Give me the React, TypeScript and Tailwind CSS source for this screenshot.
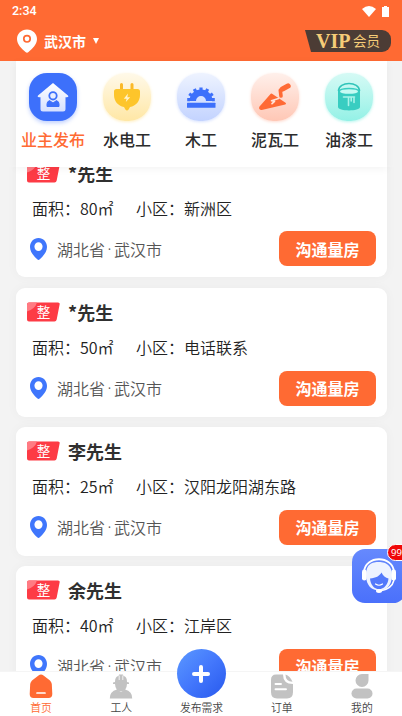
import type { ReactNode } from 'react'

type Order = {
  name: string
  area: number
  estate: string
}

const orders: Order[] = [
  { name: '*先生', area: 80, estate: '新洲区' },
  { name: '*先生', area: 50, estate: '电话联系' },
  { name: '李先生', area: 25, estate: '汉阳龙阳湖东路' },
  { name: '余先生', area: 40, estate: '江岸区' }
]

const HouseIcon = () => (
  <svg width="32" height="32" viewBox="0 0 32 32">
    <defs>
      <linearGradient id="house" x1="0" y1="0" x2="0" y2="1">
        <stop offset="0" stopColor="#ffffff" />
        <stop offset="1" stopColor="#d5e0ff" />
      </linearGradient>
    </defs>
    <path
      d="M16 2 L31 14.5 Q32 16.2 30 16.2 H28.5 V28 Q28.5 30.5 26 30.5 H6 Q3.5 30.5 3.5 28 V16.2 H2 Q0 16.2 1 14.5 Z"
      fill="url(#house)"
    />
    <circle cx="16" cy="14.8" r="3.7" fill="#e8eeff" stroke="#3d70fb" strokeWidth="1.8" />
    <path d="M12.5 19.6 Q10 20.5 10 23 V25.5 H22 V23 Q22 20.5 19.5 19.6 L16 22 Z" fill="#3d70fb" stroke="#3d70fb" strokeLinejoin="round" />
  </svg>
)

const PlugIcon = () => (
  <svg width="32" height="32" viewBox="0 0 32 32">
    <path d="M10.5 3.5 V10 M21 3.5 V10" stroke="#fbb929" strokeWidth="3" strokeLinecap="round" />
    <path
      d="M5.5 8 H26.5 Q29 8 29 10.5 V14 C29 20 25 25 19 26 L17.6 28.5 Q16 30.5 14.4 28.5 L13 26 C7 25 3 20 3 14 V10.5 Q3 8 5.5 8 Z"
      fill="#fdc52b"
    />
    <path d="M17 12.5 L12.8 17.7 H15.6 L14.8 21 L19.2 16.2 H16.3 Z" fill="#fff4cf" />
  </svg>
)

const SawIcon = () => (
  <svg width="32" height="32" viewBox="0 0 32 32" fill="#3d70fb">
    <path d="M4.5 20 A11.5 11.5 0 0 1 27.5 20 H21 A5 5 0 0 0 11 20 Z" />
    <path
      d="M16 9.5 V6.5 M10.7 10.8 L9.3 8 M6.7 14.5 L4.2 12.8 M5 18.7 H2.2 M21.3 10.8 L22.7 8 M25.3 14.5 L27.8 12.8 M27 18.7 H29.8"
      stroke="#3d70fb"
      strokeWidth="3.2"
    />
    <rect x="2" y="21.8" width="28.5" height="5" rx="0.5" />
  </svg>
)

const TrowelIcon = () => (
  <svg width="34" height="32" viewBox="0 0 34 32">
    <path d="M30 5 L22.3 9.4 L23 15" fill="none" stroke="#ff6a35" strokeWidth="3.6" strokeLinejoin="round" strokeLinecap="round" />
    <path d="M24.5 8 L30 5" stroke="#ff6a35" strokeWidth="5.4" strokeLinecap="round" />
    <path d="M13.5 13.5 L27 22.5 L3.5 28 Q1.5 28 2.3 26.2 Z" fill="#ff6a35" stroke="#ff6a35" strokeWidth="2" strokeLinejoin="round" />
    <path d="M20.5 17.5 L13.5 19.8 L16.5 20.3 L14 22.6" fill="none" stroke="#ffe3d9" strokeWidth="1.6" strokeLinecap="round" strokeLinejoin="round" />
  </svg>
)

const PaintIcon = () => (
  <svg width="32" height="32" viewBox="0 0 32 32">
    <path d="M5.5 10 C5.5 0 26.5 0 26.5 10" fill="none" stroke="#30c4b9" strokeWidth="1.6" />
    <path d="M5 10 V26 C5 30.5 27 30.5 27 26 V10 Z" fill="#38cdc1" />
    <ellipse cx="16" cy="10.5" rx="11" ry="3.8" fill="#38cdc1" />
    <ellipse cx="16" cy="10.5" rx="9" ry="2.3" fill="#c5faf3" />
    <path d="M10.5 16 H21.5 M15.5 16 V24.5 M18.2 16 V20 M21 16 V21.5" stroke="#a8f3e9" strokeWidth="1.6" strokeLinecap="round" />
  </svg>
)

const categories: { label: string; tile: string; active?: boolean; icon: ReactNode }[] = [
  {
    label: '业主发布',
    tile: 'rounded-[18px] bg-[#3d70fb] shadow-[0_2px_4px_#3d70fb55]',
    active: true,
    icon: <HouseIcon />
  },
  {
    label: '水电工',
    tile: 'rounded-[22px] bg-linear-to-b from-[#fff9e9] to-[#ffe7a5] shadow-[0_1px_3px_#ffe7a5aa]',
    icon: <PlugIcon />
  },
  {
    label: '木工',
    tile: 'rounded-[22px] bg-linear-to-b from-[#eef3ff] to-[#c3d3ff] shadow-[0_1px_3px_#c3d3ffaa]',
    icon: <SawIcon />
  },
  {
    label: '泥瓦工',
    tile: 'rounded-[22px] bg-linear-to-b from-[#fff0eb] to-[#ffc7b5] shadow-[0_1px_3px_#ffc7b5aa]',
    icon: <TrowelIcon />
  },
  {
    label: '油漆工',
    tile: 'rounded-[22px] bg-linear-to-b from-[#d5faf5] to-[#93f1e6] shadow-[0_1px_3px_#93f1e6aa]',
    icon: <PaintIcon />
  }
]

const Pin = ({ className }: { className: string }) => (
  <svg className={className} viewBox="0 0 20 24" preserveAspectRatio="none" fill="currentColor">
    <path
      fillRule="evenodd"
      d="M10 0 C4.3 0 0 4.3 0 9.7 C0 15.5 5 20 8.5 23.3 Q10 24.6 11.5 23.3 C15 20 20 15.5 20 9.7 C20 4.3 15.7 0 10 0 Z M10 4.6 A4.8 4.8 0 1 1 10 14.2 A4.8 4.8 0 1 1 10 4.6 Z"
    />
  </svg>
)

const Header = () => (
  <header className="h-[61px] shrink-0 bg-[#ff6a33] text-white">
    <div className="flex h-[23px] items-center justify-between pr-[13px] pl-3">
      <span className="font-['Roboto',sans-serif] text-[12.5px] leading-none font-medium">2:34</span>
      <div className="flex items-center gap-[6px]">
        <svg width="14" height="11" viewBox="0 0 14 11" fill="#fff">
          <path d="M0 3 Q7 -3 14 3 L7 11 Z" />
        </svg>
        <svg width="7" height="11" viewBox="0 0 7 11" fill="#fff">
          <path d="M2 0 H5 V1 H7 V11 H0 V1 H2 Z" />
        </svg>
      </div>
    </div>
    <div className="flex h-9 items-center justify-between pr-[11px] pl-[17px]">
      <div className="flex items-center">
        <svg width="20" height="24" viewBox="0 0 20 24">
          <path d="M10 0.5 C4.3 0.5 0 4.8 0 10 C0 15.8 5 19.7 8.5 23 Q10 24.4 11.5 23 C15 19.7 20 15.8 20 10 C20 4.8 15.7 0.5 10 0.5 Z" fill="#fff" />
          <circle cx="10" cy="9.8" r="3.2" fill="none" stroke="#ff6a33" strokeWidth="1.7" />
        </svg>
        <span className="ml-[7px] text-[14px] leading-none font-bold">武汉市</span>
        <svg className="ml-[7px]" width="6" height="6" viewBox="0 0 6 6" fill="#fff">
          <path d="M0 0 H6 L3 6 Z" />
        </svg>
      </div>
      <div className="flex h-[22px] w-[86px] items-center rounded-r-[9px] bg-[#4c3c35] pl-[11px] text-[#f6cc78] [clip-path:polygon(0_0,100%_0,100%_100%,7%_100%)]">
        <span className="w-9 font-['Liberation_Serif',serif] text-[20px] leading-none font-bold">VIP</span>
        <span className="pl-px text-[13.5px] leading-none">会员</span>
      </div>
    </div>
  </header>
)

const OrderCard = ({ name, area, estate }: Order) => (
  <article className="h-[129px] shrink-0 rounded-[9px] bg-white pr-[11px] pl-[11px] shadow-[0_0_12px_rgba(0,0,0,0.035)]">
    <div className="flex h-[49px] items-center">
      <svg width="33" height="20" viewBox="0 0 33 20">
        <path d="M2 0.5 H31 Q33 0.5 32.7 2 L29.7 17.5 Q29.3 19.5 27.5 19.5 H2 Q0 19.5 0 17.5 V2.5 Q0 0.5 2 0.5 Z" fill="#fd3b45" />
        <path d="M2 0.5 H10 Q8 7 0 9.5 V2.5 Q0 0.5 2 0.5 Z" fill="#ff7b83" />
        <text x="16.5" y="15" textAnchor="middle" fontSize="13.5" fill="#fff">整</text>
      </svg>
      <h2 className="ml-2 text-[18px] leading-none font-bold text-[#303030]">{name}</h2>
    </div>
    <div className="flex h-[21px] items-center pl-[5px] text-[16px] leading-none font-[350] text-[#222]">
      <span className="w-[104px]">面积：{area}㎡</span>
      <span>小区：{estate}</span>
    </div>
    <div className="mt-[13px] flex h-[35px] items-center">
      <Pin className="ml-[3px] h-[22px] w-[17px] text-[#3f76fc]" />
      <span className="ml-[10px] flex text-[16px] leading-4 font-[350] text-[#555]">
        湖北省
        <span className="w-[9px] text-center font-['Noto_Sans',sans-serif]">·</span>
        武汉市
      </span>
      <button className="ml-auto h-[35px] w-[97px] rounded-lg bg-[#ff6a33] text-[16px] leading-none font-bold text-white">
        沟通量房
      </button>
    </div>
  </article>
)

const ServiceButton = () => (
  <button className="absolute top-[549px] left-[352px] h-[54px] w-[54px] rounded-[13px] bg-linear-to-b from-[#6689fd] to-[#4a70fb]">
    <svg width="54" height="54" viewBox="0 0 54 54">
      <path d="M12 23 C13 6 41 6 42 23" fill="none" stroke="#fff" strokeWidth="1.8" />
      <path d="M14.5 31 C12 14 21 13 27 13 C34 13 42 17 39.5 31 C38 38 33 41.5 27 41.5 C21 41.5 16 38 14.5 31 Z" fill="#eef3ff" />
      <path d="M18 29.5 C24 29 27.5 27 29.5 23.5 C31 27 33.5 28.5 36.5 29.5 C36 35.5 32 40.2 27 40.2 C22 40.2 18.5 35.5 18 29.5 Z" fill="#5379fb" />
      <rect x="10" y="20.5" width="4.6" height="11" rx="2.3" fill="#fff" />
      <rect x="39.4" y="20.5" width="4.6" height="11" rx="2.3" fill="#fff" />
      <path d="M23.5 35 Q27 37.5 30.5 35" fill="none" stroke="#fff" strokeWidth="1.2" strokeLinecap="round" />
      <path d="M42 31 Q40 40 28 42" fill="none" stroke="#fff" strokeWidth="1.5" />
      <ellipse cx="27" cy="42" rx="3" ry="1.9" fill="#fff" />
    </svg>
    <span className="absolute -top-[5px] left-[35px] h-[17px] w-7 rounded-full border border-white bg-[#f00808] pl-[3px] text-left font-['Noto_Sans',sans-serif] text-[9.5px] leading-[15px] text-white">
      99
    </span>
  </button>
)

const tabs: { label: string; active?: boolean; icon: ReactNode }[] = [
  {
    label: '首页',
    active: true,
    icon: (
      <svg width="24" height="26" viewBox="0 0 24 26">
        <path d="M9.5 2.5 Q12 0.5 14.5 2.5 L21 7.5 Q22.5 9 22.8 11 L23.3 21 Q23.3 25 19.5 25 H4.5 Q0.7 25 0.7 21 L1.2 11 Q1.5 9 3 7.5 Z" fill="#ff6a33" />
        <path d="M8 20 H16" stroke="#fff" strokeWidth="1.7" strokeLinecap="round" />
      </svg>
    )
  },
  {
    label: '工人',
    icon: (
      <svg width="24" height="26" viewBox="0 0 24 26" fill="#c2c2c2">
        <path d="M6 9 Q6 3.5 9.5 3 L10 1.5 H14 L14.5 3 Q18 3.5 18 9 L20 9.5 V11 H4 V9.5 Z" />
        <path d="M10.2 2.5 V7 M13.8 2.5 V7" stroke="#fff" strokeWidth="0.8" />
        <path d="M6 11 H18 Q17.5 18.5 12 18.5 Q6.5 18.5 6 11 Z" />
        <path d="M0.8 25.5 Q0.5 18.5 8 16.5 L12 19 L16 16.5 Q23.5 18.5 23.2 25.5 Z" />
      </svg>
    )
  },
  {
    label: '发布需求',
    icon: (
      <div className="mb-px flex h-[49px] w-[49px] shrink-0 items-center justify-center rounded-full bg-linear-to-br from-[#5c98ff] via-[#4377fc] to-[#2858ed]">
        <svg width="20" height="20" viewBox="0 0 20 20" stroke="#fff" strokeWidth="4" strokeLinecap="round">
          <path d="M10 3 V17 M3 10 H17" />
        </svg>
      </div>
    )
  },
  {
    label: '订单',
    icon: (
      <svg width="24" height="26" viewBox="0 0 24 26">
        <path d="M6 1.5 H13 Q13 11 23 11 V19 Q23 25.5 17 25.5 H7 Q1 25.5 1 19 V7 Q1 1.5 6 1.5 Z" fill="#c2c2c2" />
        <path d="M15.5 1.5 Q20 3 22.5 8.8 Q15.5 8.5 15.5 1.5 Z" fill="#c2c2c2" />
        <path d="M5.5 11 H11 M5.5 16.3 H16" stroke="#fff" strokeWidth="1.9" strokeLinecap="round" />
      </svg>
    )
  },
  {
    label: '我的',
    icon: (
      <svg width="24" height="26" viewBox="0 0 24 26" fill="#c2c2c2">
        <path d="M12 1 H18.5 V7.5 A6.5 6.5 0 1 1 12 1 Z" />
        <rect x="1.5" y="15.5" width="21" height="10" rx="5" />
      </svg>
    )
  }
]

const TabBar = () => (
  <nav className="z-20 grid h-[45px] shrink-0 grid-cols-5 border-t border-[#f5f5f5] bg-white pl-px">
    {tabs.map(({ label, icon, active }) => (
      <div key={label} className="flex h-11 flex-col items-center justify-end">
        {icon}
        <span className={`pt-px pb-px text-[10.8px] leading-[15px] font-[350] ${active ? 'text-[#ff6a33]' : 'text-[#444]'}`}>
          {label}
        </span>
      </div>
    ))}
  </nav>
)

export default function App() {
  return (
    <div className="relative flex h-[716px] w-[402px] flex-col overflow-hidden bg-[#f3f3f3] font-['Noto_Sans_CJK_SC',sans-serif]">
      <Header />
      <main className="flex min-h-0 flex-1 flex-col pr-[15px] pl-4">
        <section className="z-10 grid h-[106px] shrink-0 grid-cols-5 bg-white pt-3 pr-px shadow-[0_2px_8px_rgba(0,0,0,0.05)]">
          {categories.map(({ label, tile, icon, active }) => (
            <div key={label} className="flex flex-col items-center">
              <div className={`flex h-12 w-12 items-center justify-center ${tile}`}>{icon}</div>
              <span className={`mt-[10px] text-[16px] leading-4 font-medium whitespace-nowrap ${active ? 'text-[#ff6a33]' : 'text-[#2c2c2c]'}`}>
                {label}
              </span>
            </div>
          ))}
        </section>
        <div className="-mx-4 flex min-h-0 flex-1 flex-col overflow-hidden px-4">
          <div className="-mt-[18.6px] flex flex-col gap-[10.2px]">
            {orders.map((order, index) => (
              <OrderCard key={index} {...order} />
            ))}
          </div>
        </div>
      </main>
      <TabBar />
      <ServiceButton />
    </div>
  )
}
